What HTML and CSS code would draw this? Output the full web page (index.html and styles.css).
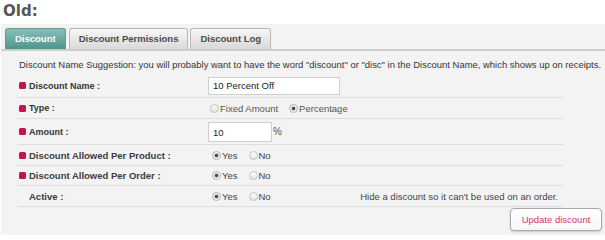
FILE: index.html
```html
<!DOCTYPE html>
<html>
<head>
    <meta charset="utf-8">
    <title>Discount</title>
    <link rel="stylesheet" href="styles.css">
</head>
<body>
    <h2 class="caption">Old:</h2>

    <div class="panel">
        <ul class="tabs">
            <li class="tab active">Discount</li>
            <li class="tab">Discount Permissions</li>
            <li class="tab">Discount Log</li>
        </ul>

        <div class="tab-body">
            <p class="hint">Discount Name Suggestion: you will probably want to have the word "discount" or "disc" in the Discount Name, which shows up on receipts.</p>

            <div class="props">
                <div class="row row-name">
                    <div class="label required"><i class="mark"></i>Discount Name :</div>
                    <div class="value"><input type="text" class="text name" value="10 Percent Off" /></div>
                </div>
                <div class="row row-type">
                    <div class="label required"><i class="mark"></i>Type :</div>
                    <div class="value options">
                        <span class="radio"></span><span class="opt">Fixed Amount</span>
                        <span class="radio checked"></span><span class="opt">Percentage</span>
                    </div>
                </div>
                <div class="row row-amount">
                    <div class="label required"><i class="mark"></i>Amount :</div>
                    <div class="value"><input type="text" class="text amount" value="10" /><span class="unit">%</span></div>
                </div>
                <div class="row row-product">
                    <div class="label alt required"><i class="mark"></i>Discount Allowed Per Product :</div>
                    <div class="value options yesno">
                        <span class="radio checked"></span><span class="opt">Yes</span>
                        <span class="radio"></span><span class="opt">No</span>
                    </div>
                </div>
                <div class="row row-order">
                    <div class="label alt required"><i class="mark"></i>Discount Allowed Per Order :</div>
                    <div class="value options yesno">
                        <span class="radio checked"></span><span class="opt">Yes</span>
                        <span class="radio"></span><span class="opt">No</span>
                    </div>
                </div>
                <div class="row row-active">
                    <div class="label alt"><i class="mark"></i>Active :</div>
                    <div class="value options yesno">
                        <span class="radio checked"></span><span class="opt">Yes</span>
                        <span class="radio"></span><span class="opt">No</span>
                        <span class="note">Hide a discount so it can't be used on an order.</span>
                    </div>
                </div>
            </div>

            <div class="actions">
                <button type="button" class="update">Update discount</button>
            </div>
        </div>
    </div>
</body>
</html>
```

FILE: styles.css
```css
body { margin: 0; background-color: #fff; font-family: "Liberation Sans", Arial, sans-serif; color: #333; }

h2.caption { margin: 0; padding: 1px 3px 0 3px; height: 23px; font-family: "DejaVu Sans", Verdana, sans-serif; font-size: 15px; line-height: 20px; font-weight: bold; color: #585858; }

div.panel { margin-left: 1px; padding: 4px 0 4px 0; background-color: #f3f3f3; }

ul.tabs { display: flex; margin: 0; padding: 0 0 0 4px; list-style: none; border-bottom: 2px solid #cdcdcd; height: 21px; }
li.tab { box-sizing: border-box; height: 21px; margin-right: 2px; padding: 0 9px; border: 1px solid #b9b9b9; border-bottom: none; border-radius: 3px 3px 0 0; background: linear-gradient(#f7f7f7, #d9d9d9); font-size: 9.5px; font-weight: bold; line-height: 20px; color: #4a4a4a; }
li.tab.active { border-color: #5f9a93; background: linear-gradient(#86c0b8, #4f958d); color: #fff; margin-right: 3px; }

p.hint { margin: 0; padding: 6px 0 0 18px; height: 17px; font-size: 9.45px; line-height: 16px; color: #333; white-space: nowrap; }

div.props { margin-left: 17px; width: 545px; }
div.row { box-sizing: border-box; display: flex; align-items: center; border-bottom: 1px solid #dcdcdc; }
div.row-name { height: 24px; }
div.row-type { height: 21px; }
div.row-amount { height: 26px; }
div.row-product { height: 21px; }
div.row-order { height: 20px; }
div.row-active { height: 21px; }

div.label { display: flex; align-items: center; width: 190px; font-size: 9px; font-weight: bold; color: #333; white-space: nowrap; }
div.label.alt { font-size: 9.5px; color: #3c3c3c; }
i.mark { display: inline-block; width: 7px; height: 7px; margin: 0 3px 0 1px; border-radius: 1.5px; background-color: #c5124d; visibility: hidden; }
div.label.required i.mark { visibility: visible; }

div.value { flex: 1; display: flex; align-items: center; }

input.text { box-sizing: border-box; margin: 0; padding: 0 4px; border: 1px solid #cfcfcf; background-color: #fff; font-family: "Liberation Sans", Arial, sans-serif; font-size: 9.5px; color: #222; outline: none; }
input.name { width: 132px; height: 18px; }
input.amount { width: 64px; height: 20px; margin-top: 1px; }
span.unit { margin-left: 1px; font-size: 10px; color: #555; }

div.options { padding-left: 2px; font-size: 9.5px; color: #555; }
div.options.yesno { padding-left: 4px; color: #444; }
span.radio { box-sizing: border-box; display: inline-block; width: 9px; height: 9px; margin-right: 1px; border: 1px solid #c2c2c2; border-radius: 50%; background: linear-gradient(#fdfdfd, #e4e4e4); }
span.radio.checked { background: radial-gradient(circle, #505050 0, #505050 1.6px, #ececec 2.2px, #ececec 100%); border-color: #b5b5b5; }
span.opt { margin-right: 11px; white-space: nowrap; }
span.note { margin-left: auto; padding-right: 5px; color: #444; white-space: nowrap; }

div.actions { display: flex; justify-content: flex-end; padding: 1px 3px 0 0; }
button.update { box-sizing: border-box; width: 92px; height: 23px; padding: 0; border: 1px solid #a9a9a9; border-radius: 4px; background: linear-gradient(#fff, #f7f7f7); box-shadow: 0 1px 2px rgba(0, 0, 0, 0.18); font-family: "Liberation Sans", Arial, sans-serif; font-size: 9.5px; color: #d2386f; cursor: pointer; }
```
